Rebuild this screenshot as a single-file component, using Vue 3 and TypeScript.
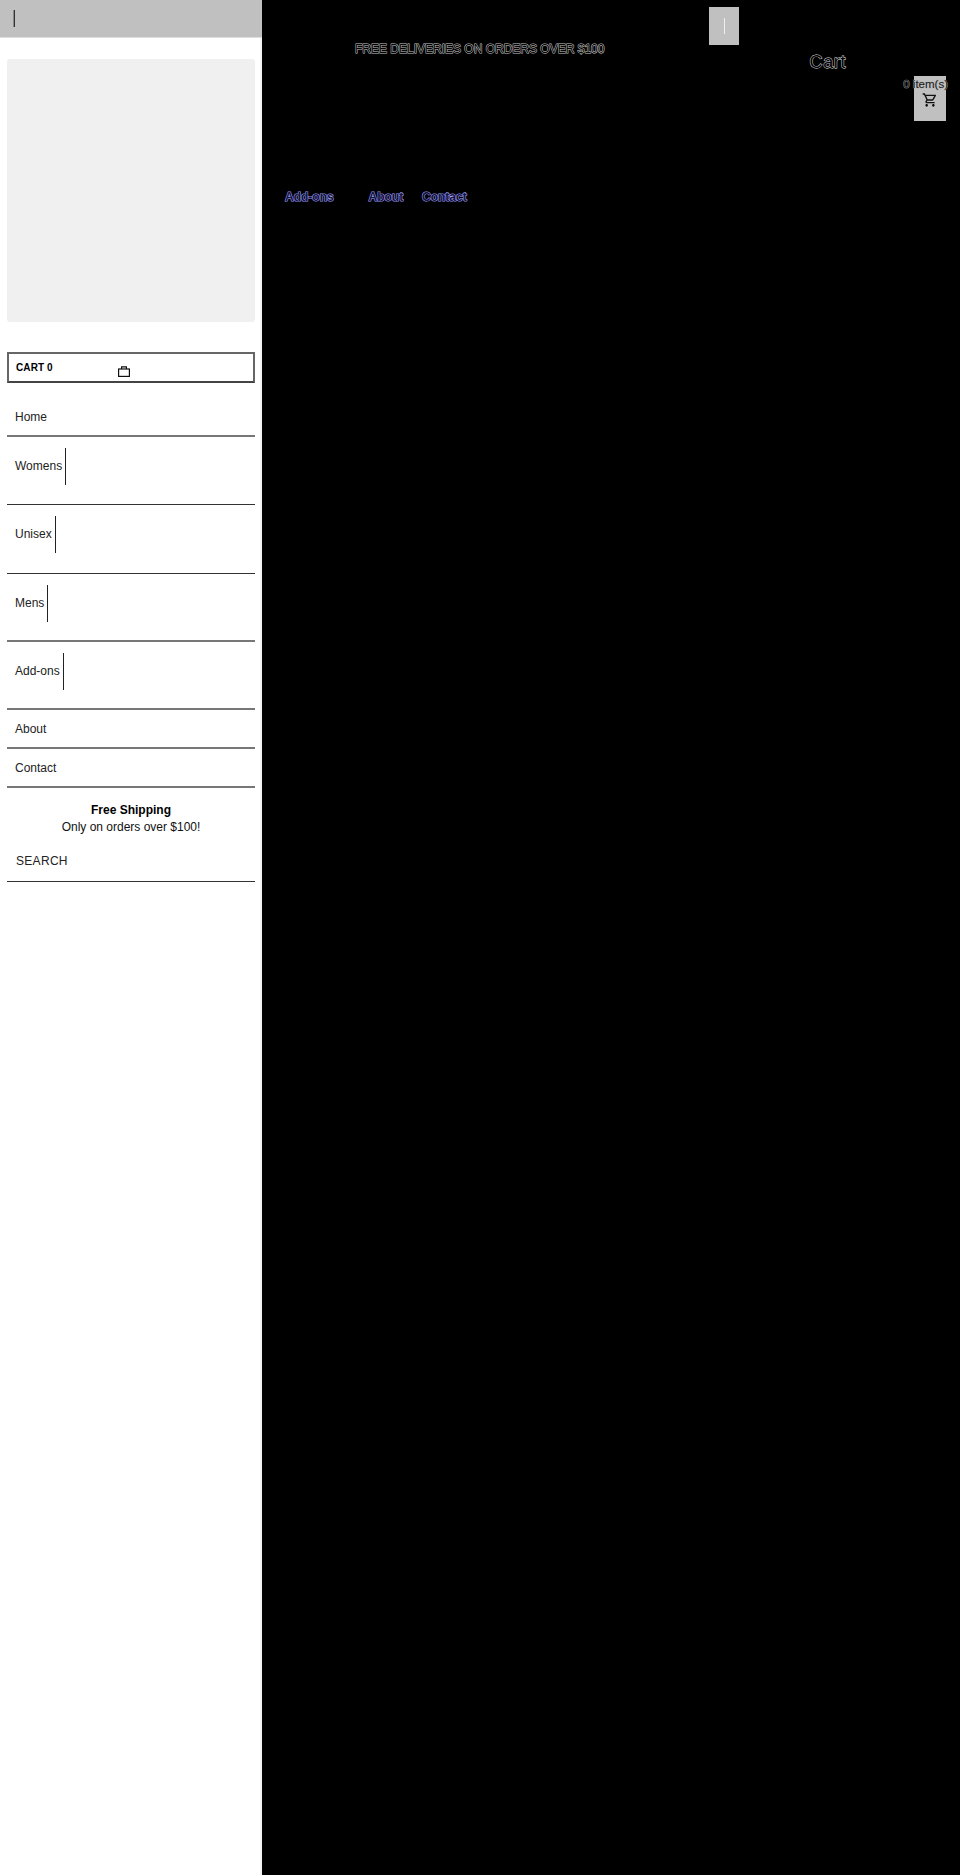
<script setup lang="ts">
const plain = ['Home']
const subs = ['Womens', 'Unisex', 'Mens', 'Add-ons']
const tail = ['About', 'Contact']
</script>

<template>
  <div class="page">
    <aside class="side">
      <div class="bar"><span class="caret"></span></div>
      <div class="hero"></div>
      <div class="cart">
        <b>CART 0</b>
        <svg class="bag" width="12" height="11" viewBox="0 0 12 11" fill="none" stroke="#111" stroke-width="1.2">
          <rect x="0.6" y="3" width="10.8" height="7.4" />
          <path d="M3.6 3V0.8h4.8V3" />
        </svg>
      </div>
      <nav class="menu">
        <a v-for="m in plain" :key="m" class="item">{{ m }}</a>
        <a v-for="m in subs" :key="m" class="item sub"><span>{{ m }}</span><i class="rule"></i></a>
        <a v-for="m in tail" :key="m" class="item">{{ m }}</a>
      </nav>
      <div class="promo">
        <strong>Free Shipping</strong>
        <span>Only on orders over $100!</span>
      </div>
      <div class="search">SEARCH</div>
    </aside>

    <main class="main">
      <div class="top">
        <div class="promo-line">FREE DELIVERIES ON ORDERS OVER $100</div>
        <div class="menu-btn"><i></i></div>
      </div>
      <div class="cart-area">
        <div class="cart-title">Cart</div>
        <div class="cart-btn">
          <span class="count">0 item(s)</span>
          <svg width="16" height="16" viewBox="0 0 24 24" fill="#111">
            <path d="M15.55 13c.75 0 1.41-.41 1.75-1.03l3.58-6.49c.37-.66-.11-1.48-.87-1.48H5.21l-.94-2H1v2h2l3.6 7.59-1.35 2.44C4.52 15.37 5.48 17 7 17h12v-2H7l1.1-2h7.45zM6.16 6h12.15l-2.76 5H8.53L6.16 6zM7 18c-1.1 0-1.99.9-1.99 2S5.9 22 7 22s2-.9 2-2-.9-2-2-2zm10 0c-1.1 0-1.99.9-1.99 2s.89 2 1.99 2 2-.9 2-2-.9-2-2-2z" />
          </svg>
        </div>
      </div>
      <nav class="links">
        <a class="a1">Add-ons</a>
        <a class="a2">About</a>
        <a>Contact</a>
      </nav>
    </main>
  </div>
</template>

<style>
body { margin: 0; background: #fff; }
</style>

<style scoped>
.page {
  display: flex;
  width: 960px;
  height: 1875px;
  overflow: hidden;
  font-family: "Liberation Sans", Arial, sans-serif;
  color: #111;
}
.side {
  width: 262px;
  flex: none;
  background: #fff;
  box-shadow: inset -2px 0 0 #f4f4f4;
}
.bar {
  height: 37px;
  background: #c0c0c0;
  border-bottom: 1px solid #ddd;
  display: flex;
  align-items: center;
  padding-left: 13px;
}
.caret {
  width: 1px;
  height: 17px;
  background: #333;
  border-left: 1px solid #888;
}
.hero {
  height: 263px;
  margin: 21px 7px 0;
  background: #f0f0f0;
  border-radius: 3px;
}
.cart {
  height: 27px;
  margin: 30px 7px 0;
  border: 2px solid #666;
  border-bottom-color: #444;
  position: relative;
  display: flex;
  align-items: center;
  padding-left: 7px;
  font-size: 10px;
  letter-spacing: 0.1px;
  color: #000;
}
.bag { position: absolute; left: 109px; top: 12px; }
.menu { margin: 0 7px; padding-top: 14px; display: flex; flex-direction: column; }
.item {
  display: flex;
  align-items: flex-start;
  height: 38px;
  box-sizing: border-box;
  border-bottom: 2px solid #777;
  padding: 11px 8px 0;
  font-size: 12px;
  line-height: 18px;
  color: #222;
}
.item:first-child { height: 40px; }
.item.sub { height: 68.3px; border-bottom: 1px solid #333; }
.item.sub:nth-child(4),
.item.sub:nth-child(5) { border-bottom: 2px solid #777; }
.item.sub span { padding-top: 9px; }
.rule { width: 1px; height: 37px; background: #222; margin-left: 3px; }
.item:nth-child(n + 6) { height: 39px; padding-top: 10px; }
.promo {
  display: flex;
  flex-direction: column;
  align-items: center;
  margin-top: 14px;
  font-size: 12px;
  line-height: 17px;
}
.promo strong { font-weight: 700; color: #000; }
.search {
  margin: 15px 7px 0;
  padding: 0 9px;
  height: 30px;
  border-bottom: 1px solid #333;
  font-size: 12px;
  line-height: 20px;
  letter-spacing: 0.3px;
  color: #222;
}
.main {
  flex: 1;
  background: #000;
  position: relative;
}
.top {
  display: flex;
  align-items: flex-start;
  padding: 7px 0 0 93px;
}
.promo-line {
  width: 354px;
  margin-top: 35px;
  font-size: 12px;
  line-height: 15px;
  color: #000;
  -webkit-text-stroke: 1px #c4c4c4;
  paint-order: stroke fill;
  white-space: nowrap;
}
.menu-btn {
  width: 30px;
  height: 38px;
  background: #c0c0c0;
  display: flex;
  align-items: center;
  justify-content: center;
}
.menu-btn i { width: 1px; height: 16px; background: #eee; }
.cart-area {
  display: flex;
  justify-content: flex-end;
  align-items: flex-start;
  padding-right: 14px;
  margin-top: -5px;
  height: 80px;
}
.cart-title {
  margin: 0 68px 0 0;
  font-size: 18px;
  line-height: 21px;
  color: #000;
  -webkit-text-stroke: 0.9px #e4e4e4;
  paint-order: stroke fill;
  letter-spacing: 0.6px;
}
.cart-btn {
  width: 32px;
  height: 45px;
  margin-top: 24px;
  background: #c0c0c0;
  position: relative;
  display: flex;
  align-items: flex-end;
  justify-content: center;
  padding-bottom: 13px;
  box-sizing: border-box;
}
.count {
  position: absolute;
  right: -2px;
  top: 0;
  font-size: 11.5px;
  line-height: 16px;
  white-space: nowrap;
  color: #1a1a1a;
  -webkit-text-stroke: 0.7px #aaa;
  paint-order: stroke fill;
}
.links {
  display: flex;
  padding-left: 23px;
  margin-top: 58px;
  font-size: 12px;
  line-height: 15px;
  font-weight: 700;
}
.links a {
  color: #14143a;
  -webkit-text-stroke: 1.1px #9c9cff;
  paint-order: stroke fill;
}
.a1 { width: 83.5px; }
.a2 { width: 53.5px; }
</style>
